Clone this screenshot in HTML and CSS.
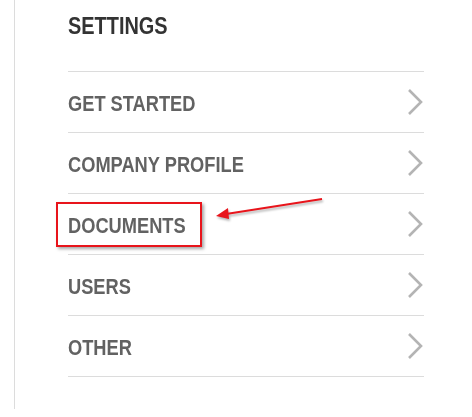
FILE: index.html
```html
<!DOCTYPE html>
<html lang="en">
<head>
  <meta charset="UTF-8" />
  <title>Settings</title>
  <link rel="stylesheet" href="styles.css">
</head>
<body>
  <div class="panel">
    <h2 class="title"><span>SETTINGS</span></h2>
    <ul class="menu">
      <li class="item"><span>GET STARTED</span>
        <svg class="chev" width="16" height="26" viewBox="0 0 16 26"><polyline points="2,1 14,13 2,25" /></svg></li>
      <li class="item"><span>COMPANY PROFILE</span>
        <svg class="chev" width="16" height="26" viewBox="0 0 16 26"><polyline points="2,1 14,13 2,25" /></svg></li>
      <li class="item"><span>DOCUMENTS</span>
        <svg class="chev" width="16" height="26" viewBox="0 0 16 26"><polyline points="2,1 14,13 2,25" /></svg></li>
      <li class="item"><span>USERS</span>
        <svg class="chev" width="16" height="26" viewBox="0 0 16 26"><polyline points="2,1 14,13 2,25" /></svg></li>
      <li class="item"><span>OTHER</span>
        <svg class="chev" width="16" height="26" viewBox="0 0 16 26"><polyline points="2,1 14,13 2,25" /></svg></li>
    </ul>
  </div>

  <!-- annotation -->
  <div class="mark"></div>
  <svg class="arrow" width="472" height="417" viewBox="0 0 472 417">
    <line x1="322" y1="199" x2="226" y2="214" />
    <polygon points="216,216 228,208 229,219" />
  </svg>
</body>
</html>
```

FILE: styles.css
```css
body {
  margin: 0;
  background: #fff;
  font-family: "Liberation Sans", Arial, sans-serif;
}

.panel {
  margin-left: 14px;
  height: 409px;
  border-left: 1px solid #dcdcdc;
  padding-left: 53px;
  width: 356px;
}

.title {
  margin: 0;
  padding-top: 12px;
  height: 72px;
  box-sizing: border-box;
  font-size: 24px;
  line-height: 28px;
  font-weight: bold;
  color: #333;
  border-bottom: 1px solid #dcdcdc;
}

.title span,
.item span {
  display: inline-block;
  transform: scaleX(0.83);
  transform-origin: left center;
  white-space: nowrap;
}

.menu {
  list-style: none;
  margin: 0;
  padding: 0;
}

.item {
  height: 60px;
  border-bottom: 1px solid #dcdcdc;
  display: flex;
  align-items: center;
  justify-content: space-between;
  font-size: 22px;
  font-weight: bold;
  color: #626262;
}

.item span {
  padding-top: 3px;
}

.chev {
  margin-right: 1px;
}

.chev polyline {
  fill: none;
  stroke: #b4b4b4;
  stroke-width: 2.6;
}

.mark {
  position: absolute;
  left: 56px;
  top: 202px;
  width: 142px;
  height: 41px;
  border: 2px solid #e8141b;
  box-shadow: 2px 2px 3px rgba(0,0,0,0.35);
}

.arrow {
  position: absolute;
  left: 0;
  top: 0;
  filter: drop-shadow(1px 2px 1px rgba(0,0,0,0.3));
}

.arrow line {
  stroke: #e8141b;
  stroke-width: 2;
}

.arrow polygon {
  fill: #e8141b;
}
```
